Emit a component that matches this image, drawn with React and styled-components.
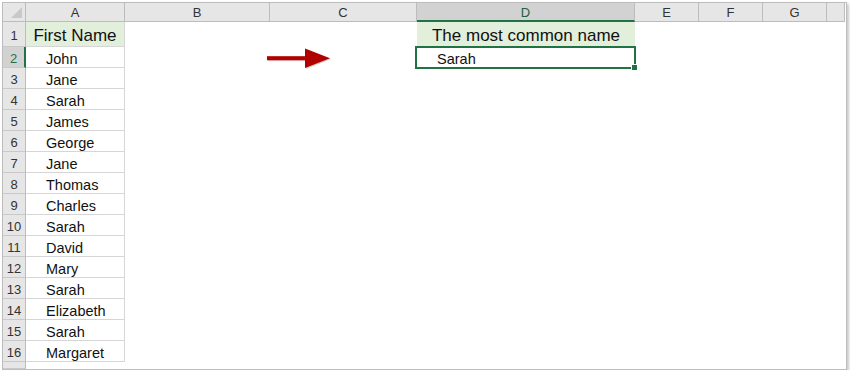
import React from "react";
import styled, { createGlobalStyle } from "styled-components";

const GlobalStyle = createGlobalStyle`
  html, body { margin: 0; padding: 0; background: #fff; }
  body { font-family: "Liberation Sans", Arial, sans-serif; }
`;

const names = [
  "John", "Jane", "Sarah", "James", "George", "Jane", "Thomas", "Charles",
  "Sarah", "David", "Mary", "Sarah", "Elizabeth", "Sarah", "Margaret",
];

const columns = [
  { key: "A", width: 99 },
  { key: "B", width: 145 },
  { key: "C", width: 147 },
  { key: "D", width: 218, selected: true },
  { key: "E", width: 64 },
  { key: "F", width: 64 },
  { key: "G", width: 64 },
  { key: "H", width: 18, hideLabel: true },
];

const Frame = styled.div`
  position: relative;
  margin: 2px 0 0 2px;
  width: 843px;
  height: 366px;
  border: 1px solid #bdbdbd;
  box-shadow: 2px 2px 3px rgba(0, 0, 0, 0.22);
  overflow: hidden;
  background: #fff;
`;

const Sheet = styled.div`
  display: grid;
  grid-template-columns: 23px ${columns.map((c) => `${c.width}px`).join(" ")};
  grid-template-rows: 19px 25px repeat(15, 21px) 1fr;
  height: 100%;
`;

const Corner = styled.div`
  position: relative;
  background: #e6e6e6;
  border-right: 1px solid #bcbcbc;
  border-bottom: 1px solid #bcbcbc;
  box-sizing: border-box;

  &::after {
    content: "";
    position: absolute;
    right: 3px;
    bottom: 3px;
    border-left: 11px solid transparent;
    border-bottom: 11px solid #c8c8c8;
  }
`;

const ColHead = styled.div`
  display: flex;
  align-items: center;
  justify-content: center;
  box-sizing: border-box;
  font-size: 13px;
  color: ${(p) => (p.$selected ? "#215f3d" : "#333")};
  background: ${(p) => (p.$selected ? "#d2d2d2" : "#e6e6e6")};
  border-right: 1px solid #bcbcbc;
  border-bottom: ${(p) => (p.$selected ? "2px solid #217346" : "1px solid #bcbcbc")};
  padding-top: ${(p) => (p.$selected ? "1px" : "0")};
`;

const RowHead = styled.div`
  display: flex;
  align-items: center;
  justify-content: center;
  box-sizing: border-box;
  font-size: 13px;
  color: ${(p) => (p.$selected ? "#217346" : "#333")};
  background: ${(p) => (p.$selected ? "#d2d2d2" : "#e6e6e6")};
  border-right: ${(p) => (p.$selected ? "2px solid #217346" : "1px solid #bcbcbc")};
  border-bottom: 1px solid #c9c9c9;
  padding-top: 3px;
`;

const Cell = styled.div`
  position: relative;
  display: flex;
  align-items: center;
  justify-content: ${(p) => (p.$center ? "center" : "flex-start")};
  box-sizing: border-box;
  padding-left: ${(p) => (p.$center ? "0" : "20px")};
  font-family: "Liberation Sans", Arial, sans-serif;
  font-size: ${(p) => (p.$title ? "17px" : "14.5px")};
  color: #111;
  white-space: nowrap;
  background: ${(p) => (p.$fill ? "#e2efda" : "transparent")};
  border-right: ${(p) => (p.$grid ? "1px solid #d6d6d6" : "0")};
  border-bottom: ${(p) => (p.$grid ? "1px solid #d6d6d6" : "0")};
  padding-top: ${(p) => (p.$title ? "3px" : "3px")};
`;

const Selection = styled.div`
  position: absolute;
  inset: -1px -1px -1px -2px;
  border: 2px solid #217346;
  pointer-events: none;

  &::after {
    content: "";
    position: absolute;
    right: -4px;
    bottom: -4px;
    width: 5px;
    height: 5px;
    background: #217346;
    border: 1px solid #fff;
  }
`;

const ArrowShape = styled.svg`
  position: absolute;
  left: 262px;
  top: 43px;
`;

const Arrow = () => (
  <ArrowShape width="70" height="26" viewBox="0 0 70 26">
    <defs>
      <filter id="arrowShade" x="-10%" y="-30%" width="130%" height="160%">
        <feDropShadow dx="0.8" dy="0.8" stdDeviation="0.7" floodColor="#000" floodOpacity="0.25" />
      </filter>
    </defs>
    <g filter="url(#arrowShade)" fill="#b00000">
      <rect x="2" y="10.2" width="40" height="4" />
      <path d="M40 2.5 L65 12.2 L40 21.9 Z" />
    </g>
  </ArrowShape>
);

export default function App() {
  const rows = [];

  // row 1: headings
  rows.push(
    <React.Fragment key="r1">
      <RowHead>1</RowHead>
      <Cell $center $title $fill $grid>First Name</Cell>
      <Cell />
      <Cell />
      <Cell $center $title $fill>The most common name</Cell>
      <Cell />
      <Cell />
      <Cell />
      <Cell />
    </React.Fragment>
  );

  names.forEach((name, i) => {
    const n = i + 2;
    rows.push(
      <React.Fragment key={`r${n}`}>
        <RowHead $selected={n === 2}>{n}</RowHead>
        <Cell $grid>{name}</Cell>
        <Cell />
        <Cell />
        <Cell>
          {n === 2 && (
            <>
              Sarah
              <Selection />
            </>
          )}
        </Cell>
        <Cell />
        <Cell />
        <Cell />
        <Cell />
      </React.Fragment>
    );
  });

  return (
    <>
      <GlobalStyle />
      <Frame>
        <Sheet>
          <Corner />
          {columns.map((c) => (
            <ColHead key={c.key} $selected={c.selected}>
              {c.hideLabel ? "" : c.key}
            </ColHead>
          ))}
          {rows}
          <RowHead />
          <Cell />
        </Sheet>
        <Arrow />
      </Frame>
    </>
  );
}
